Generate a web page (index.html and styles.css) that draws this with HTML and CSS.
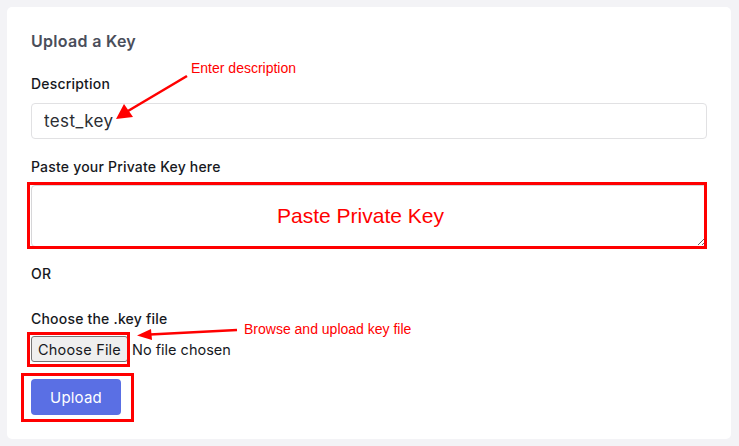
FILE: index.html
```html
<!DOCTYPE html>
<html>
<head>
<meta charset="utf-8">
<link rel="stylesheet" href="styles.css">
</head>
<body>
<div class="page">
  <form class="card">
    <h2 class="title">Upload a Key</h2>
    <label class="label lbl-desc">Description</label>
    <input class="text-input" type="text" value="test_key">
    <label class="label lbl-key">Paste your Private Key here</label>
    <textarea class="key-area"></textarea>
    <div class="label lbl-or">OR</div>
    <label class="label lbl-file">Choose the .key file</label>
    <input class="file-input" type="file">
    <div class="actions"><button type="button" class="btn-upload">Upload</button></div>
  </form>

  <div class="annotations">
    <svg class="arrows" width="739" height="446" viewBox="0 0 739 446">
      <line x1="187" y1="76" x2="128" y2="111" stroke="#f00" stroke-width="2.6"/>
      <polygon points="116,119 124,104 133,117" fill="#f00"/>
      <line x1="237" y1="330" x2="150" y2="334.5" stroke="#f00" stroke-width="2.6"/>
      <polygon points="137,335.5 151,329 152,340" fill="#f00"/>
    </svg>
    <div class="note note-desc">Enter description</div>
    <div class="note note-paste">Paste Private Key</div>
    <div class="note note-file">Browse and upload key file</div>
    <div class="box box-area"></div>
    <div class="box box-file"></div>
    <div class="box box-upload"></div>
  </div>
</div>
</body>
</html>
```

FILE: styles.css
```css
* { box-sizing: border-box; }
html, body {
  margin: 0;
  padding: 0;
  background: #f3f3f6;
  width: 739px;
  height: 446px;
  overflow: hidden;
}
.page {
  position: relative;
  width: 739px;
  height: 446px;
  padding: 7px 8px 7px 7px;
  font-family: Inter, "Noto Sans", sans-serif;
}
.card {
  background: #fff;
  border-radius: 5px;
  height: 432px;
  padding: 22px 24px 0 24px;
  display: flex;
  flex-direction: column;
  align-items: flex-start;
}
.title {
  margin: 0;
  font-size: 16px;
  line-height: 24px;
  font-weight: 600;
  color: #4a4e5a;
  letter-spacing: 0.3px;
}
.label {
  font-size: 14px;
  line-height: 21px;
  font-weight: 500;
  color: #17191e;
  letter-spacing: 0.2px;
}
.lbl-desc { margin-top: 20px; }
.lbl-key { margin-top: 17px; }
.lbl-or { margin-top: 16px; }
.lbl-file { margin-top: 24px; }
.text-input {
  margin-top: 9px;
  width: 100%;
  height: 36px;
  border: 1px solid #e1e1e3;
  border-radius: 4px;
  padding: 0 12px;
  font-family: inherit;
  font-size: 17px;
  letter-spacing: 0.4px;
  color: #2b2d33;
  outline: none;
}
.key-area {
  margin-top: 8px;
  width: 100%;
  height: 62px;
  border: 1px solid #d6d6d8;
  border-radius: 4px;
  resize: vertical;
  font-family: inherit;
  display: block;
}
.file-input {
  margin-top: 7px;
  font-family: inherit;
  font-size: 14.5px;
  color: #17191e;
  height: 26px;
}
.file-input::file-selector-button {
  font-family: inherit;
  font-size: 14.5px;
  letter-spacing: 0.2px;
  height: 26px;
  padding: 0 6px;
  margin-right: 4px;
  background: #efefef;
  border: 1px solid #767676;
  border-radius: 3px;
  color: #17191e;
}
.actions { margin-top: 17px; }
.btn-upload {
  width: 90px;
  height: 36px;
  border: none;
  border-radius: 4px;
  background: #5a6fe4;
  color: #fff;
  font-family: inherit;
  font-size: 15px;
  font-weight: 400;
  letter-spacing: 0.2px;
}
.annotations {
  position: absolute;
  left: 0;
  top: 0;
  width: 739px;
  height: 446px;
  pointer-events: none;
}
.arrows { position: absolute; left: 0; top: 0; }
.note {
  position: absolute;
  color: #f00;
  font-family: "Liberation Sans", Arial, sans-serif;
  white-space: nowrap;
  line-height: 1;
}
.note-desc { left: 191px; top: 61px; font-size: 14px; }
.note-paste { left: 277px; top: 205px; font-size: 21px; }
.note-file { left: 244px; top: 322px; font-size: 14px; }
.box {
  position: absolute;
  border: 3px solid #f00;
}
.box-area { left: 27px; top: 182px; width: 680px; height: 67px; }
.box-file { left: 27px; top: 332px; width: 103px; height: 35px; }
.box-upload { left: 21px; top: 373px; width: 113px; height: 49px; }
```
